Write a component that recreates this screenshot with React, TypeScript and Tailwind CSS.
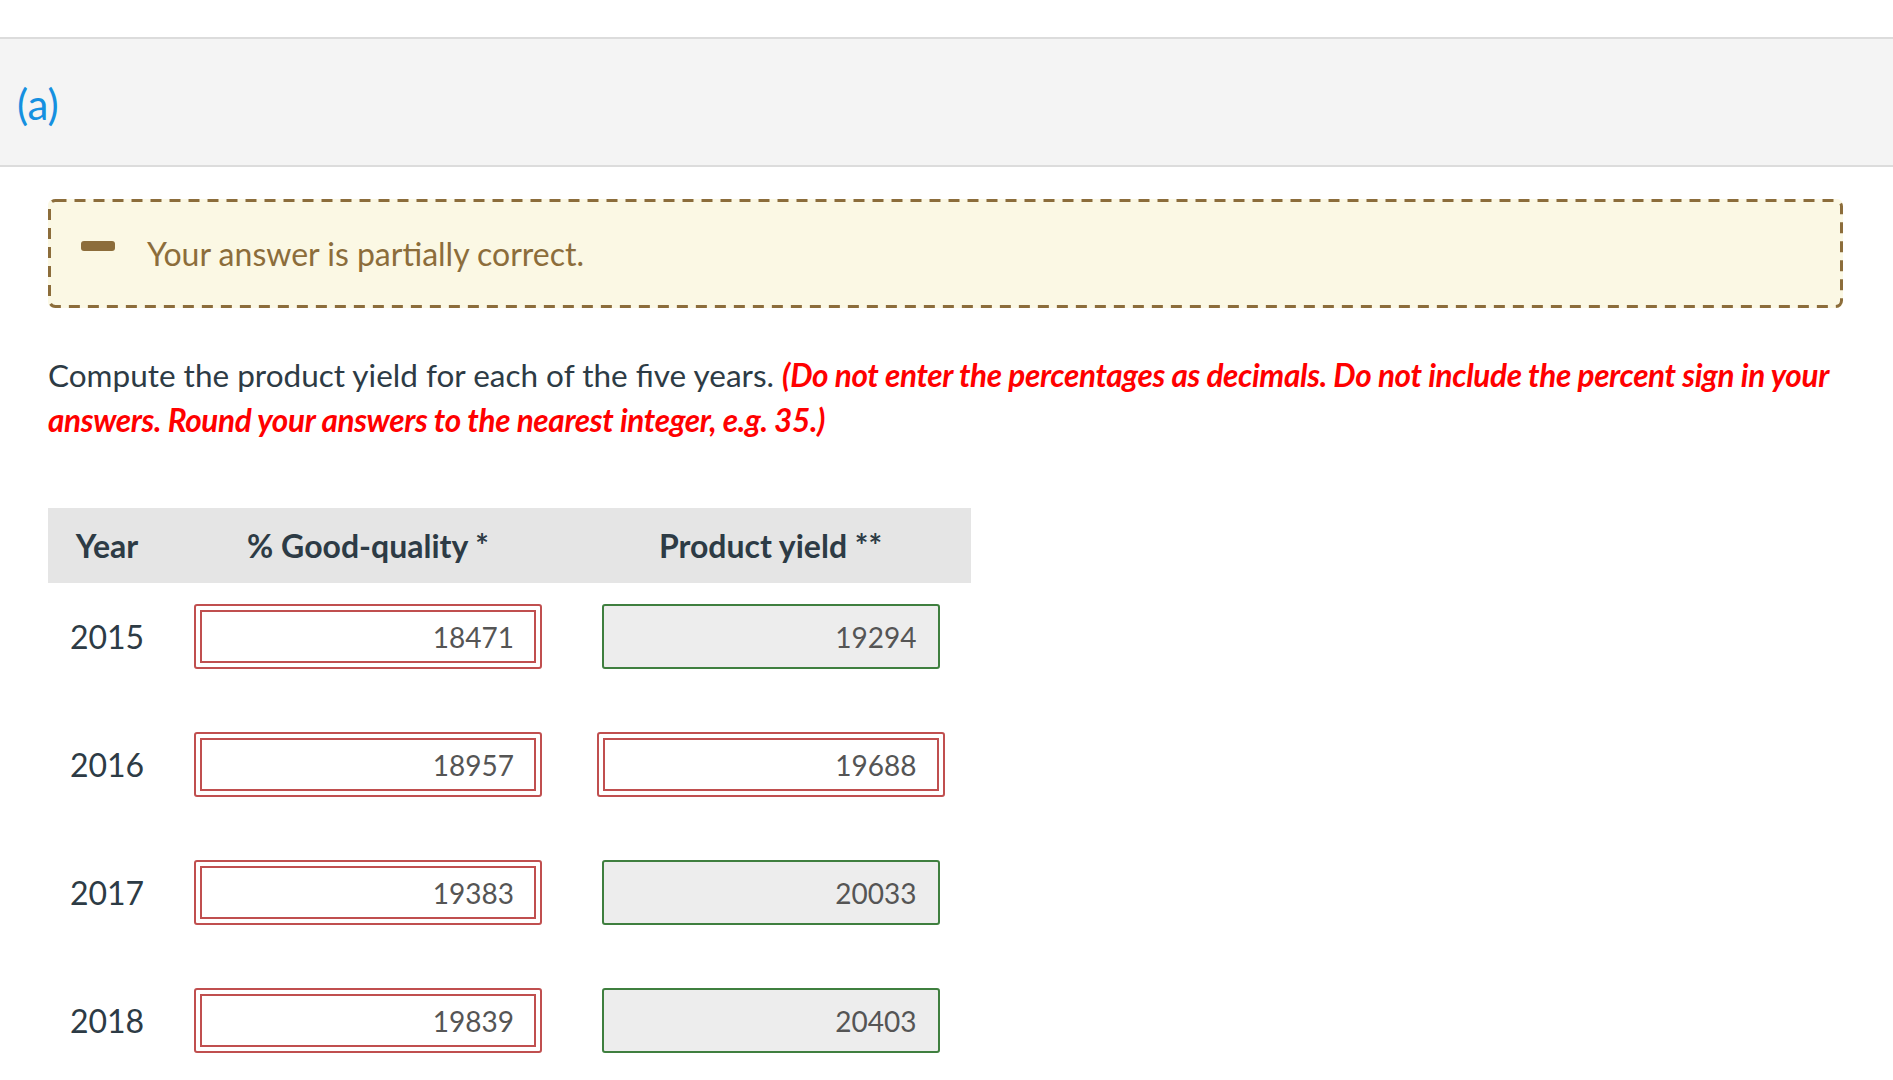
import React from "react";

type Cell = { value: string; correct: boolean };

const rows: { year: string; quality: Cell; yieldCell: Cell }[] = [
  { year: "2015", quality: { value: "18471", correct: false }, yieldCell: { value: "19294", correct: true } },
  { year: "2016", quality: { value: "18957", correct: false }, yieldCell: { value: "19688", correct: false } },
  { year: "2017", quality: { value: "19383", correct: false }, yieldCell: { value: "20033", correct: true } },
  { year: "2018", quality: { value: "19839", correct: false }, yieldCell: { value: "20403", correct: true } },
];

function AnswerBox({ cell }: { cell: Cell }) {
  if (cell.correct) {
    return (
      <div className="w-[338px] h-[65px] rounded-[3px] border-2 border-[#3f7f3f] bg-[#ededed] flex items-center justify-end pr-[21px] text-[28px] text-[#555555]">
        {cell.value}
      </div>
    );
  }
  return (
    <div className="w-[348px] h-[65px] rounded-[3px] border-2 border-[#c04f4f] p-[4px] bg-white">
      <div className="h-full border-2 border-[#c04f4f] flex items-center justify-end pr-[20px] text-[28px] text-[#555555]">
        {cell.value}
      </div>
    </div>
  );
}

export default function App() {
  return (
    <div
      className="w-full h-[1080px] overflow-hidden bg-white pt-[37px]"
      style={{ fontFamily: "Lato, 'Open Sans', sans-serif" }}
    >
      {/* part header */}
      <div className="h-[130px] border-y-2 border-[#dcdcdc] bg-[#f4f4f4] flex items-center pl-[17px]">
        <span className="text-[42px] text-[#1590e0] leading-none mt-[4px]">(a)</span>
      </div>

      <div className="pl-[48px] pr-[50px] pt-[32px]">
        {/* feedback */}
        <div className="relative h-[109px] rounded-[6px] bg-[#fbf8e4] flex items-center pl-[33px]">
          <svg className="absolute inset-0 w-full h-full pointer-events-none" preserveAspectRatio="none">
            <rect
              x="1.5"
              y="1.5"
              width="calc(100% - 3px)"
              height="calc(100% - 3px)"
              rx="6"
              fill="none"
              stroke="#8c6d3b"
              strokeWidth="3"
              strokeDasharray="11 8"
            />
          </svg>
          <div className="w-[34px] h-[10px] rounded-[3px] bg-[#8c6d3b] mb-[16px]" />
          <span className="ml-[32px] text-[32px] text-[#8c6d3b]">Your answer is partially correct.</span>
        </div>

        {/* question */}
        <p className="mt-[45px] text-[31.5px] leading-[45px] text-[#2d3b45]">
          Compute the product yield for each of the five years.{" "}
          <span className="font-bold italic text-[#ff0000] tracking-[-0.35px]">
            (Do not enter the percentages as decimals. Do not include the percent sign in your answers. Round your
            answers to the nearest integer, e.g. 35.)
          </span>
        </p>

        {/* table */}
        <div className="mt-[65px] w-[923px]">
          <div className="h-[75px] bg-[#e5e5e5] grid grid-cols-[118px_404px_401px] items-center text-[32px] font-bold text-[#2d3b45]">
            <div className="text-center">Year</div>
            <div className="text-center">% Good-quality *</div>
            <div className="text-center">Product yield **</div>
          </div>
          <div className="pt-[21px] flex flex-col gap-y-[63px]">
            {rows.map((r) => (
              <div key={r.year} className="grid grid-cols-[118px_404px_401px] items-center h-[65px]">
                <div className="text-center text-[32px] text-[#2d3b45]">{r.year}</div>
                <div className="flex justify-center">
                  <AnswerBox cell={r.quality} />
                </div>
                <div className="flex justify-center">
                  <AnswerBox cell={r.yieldCell} />
                </div>
              </div>
            ))}
          </div>
        </div>
      </div>
    </div>
  );
}
